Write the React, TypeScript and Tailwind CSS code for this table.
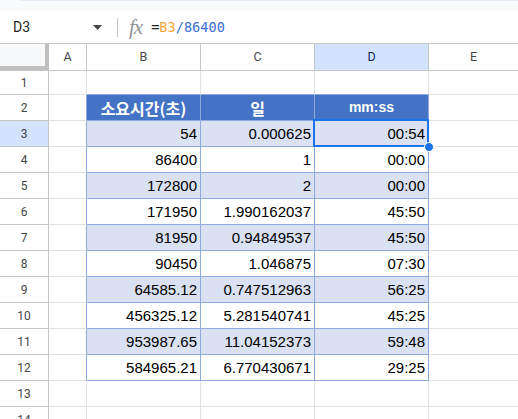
import React from "react";

const rows = [
  ["54", "0.000625", "00:54"],
  ["86400", "1", "00:00"],
  ["172800", "2", "00:00"],
  ["171950", "1.990162037", "45:50"],
  ["81950", "0.94849537", "45:50"],
  ["90450", "1.046875", "07:30"],
  ["64585.12", "0.747512963", "56:25"],
  ["456325.12", "5.281540741", "45:25"],
  ["953987.65", "11.04152373", "59:48"],
  ["584965.21", "6.770430671", "29:25"],
];

const cols = ["A", "B", "C", "D", "E"];

function RowNum({ n, active }: { n: number; active?: boolean }) {
  return (
    <div
      className={`w-[49px] shrink-0 flex items-center justify-center border-r border-b border-[#c4c7c5] text-[12px] text-[#444746] ${
        active ? "bg-[#d3e3fd]" : "bg-white"
      }`}
    >
      {n}
    </div>
  );
}

function EmptyRow({ n, h, topOfTable }: { n: number; h: string; topOfTable?: boolean }) {
  return (
    <div className={`flex ${h}`}>
      <RowNum n={n} />
      <div className="w-[38px] shrink-0 border-r border-b border-[#e1e1e1]" />
      {[0, 1, 2].map((i) => (
        <div
          key={i}
          className={`w-[114px] shrink-0 border-r border-b ${
            topOfTable ? "border-b-[#8eaadb]" : "border-b-[#e1e1e1]"
          } border-r-[#e1e1e1]`}
        />
      ))}
      <div className="flex-1 border-b border-[#e1e1e1]" />
    </div>
  );
}

export default function App() {
  return (
    <div className="w-[518px] h-[419px] overflow-hidden bg-white font-['Roboto',sans-serif]">
      {/* toolbar edge */}
      <div className="h-[11px] bg-[#f9fbfd]">
        <div className="ml-[20px] h-[1px] rounded-bl-[8px] bg-[#e6ecf5]" />
      </div>

      {/* formula bar */}
      <div className="h-[33px] flex items-center border-b border-[#c4c7c5] bg-white">
        <div className="w-[110px] flex items-center pl-[13px] pr-[8px]">
          <span className="text-[14px] text-[#1f1f1f]">D3</span>
          <svg className="ml-auto" width="9" height="5" viewBox="0 0 9 5">
            <path d="M0 0h9L4.5 5z" fill="#444746" />
          </svg>
        </div>
        <div className="ml-[7px] w-px h-[19px] bg-[#c4c7c5]" />
        <span className="ml-[11px] text-[21px] leading-none italic text-[#8f959b] font-['Liberation_Serif',serif] tracking-[-1px]">
          fx
        </span>
        <span className="ml-[9px] text-[13.6px] font-['DejaVu_Sans_Mono',monospace] text-[#1f1f1f]">
          =<span className="text-[#f5a742]">B3</span>
          <span className="text-[#3d6fd6]">/86400</span>
        </span>
      </div>

      {/* column header */}
      <div className="flex h-[27px] border-b border-[#c4c7c5]">
        <div className="w-[49px] shrink-0 bg-[#f8f9fa] border-r-[4px] border-b-[4px] border-[#c0c0c0]" />
        {cols.map((c) => (
          <div
            key={c}
            className={`${
              c === "A" ? "w-[38px]" : c === "E" ? "flex-1" : "w-[114px]"
            } shrink-0 flex items-center justify-center text-[12.5px] ${
              c === "E" ? "" : "border-r"
            } border-[#c4c7c5] ${
              c === "D" ? "bg-[#d3e3fd] text-[#0b2a5b]" : "text-[#444746]"
            }`}
          >
            {c}
          </div>
        ))}
      </div>

      {/* row 1 */}
      <EmptyRow n={1} h="h-[24px]" topOfTable />

      {/* row 2 - table header */}
      <div className="flex h-[26px]">
        <RowNum n={2} />
        <div className="w-[38px] shrink-0 border-r border-r-[#8eaadb] border-b border-b-[#e1e1e1]" />
        {["소요시간(초)", "일", "mm:ss"].map((t, i) => (
          <div
            key={i}
            className={`w-[114px] shrink-0 flex items-center justify-center bg-[#4472c4] text-white font-bold border-r border-b border-[#8eaadb] ${
              i === 2 ? "text-[14px] font-['Liberation_Sans',sans-serif]" : "text-[16px] font-['Noto_Sans_CJK_KR',sans-serif]"
            }`}
          >
            {t}
          </div>
        ))}
        <div className="flex-1 border-b border-[#e1e1e1]" />
      </div>

      {/* data rows */}
      {rows.map((r, idx) => {
        const n = idx + 3;
        const shaded = idx % 2 === 0;
        return (
          <div key={n} className="relative flex h-[26px]">
            <RowNum n={n} active={n === 3} />
            <div className="w-[38px] shrink-0 border-r border-r-[#8eaadb] border-b border-b-[#e1e1e1]" />
            {r.map((v, i) => (
              <div
                key={i}
                className={`w-[114px] shrink-0 flex items-center justify-end pr-[3px] pt-[1px] text-[15px] text-black font-['Liberation_Sans',sans-serif] border-r border-b border-[#8eaadb] ${
                  shaded ? "bg-[#d9e1f2]" : "bg-white"
                }`}
              >
                {v}
              </div>
            ))}
            <div className="flex-1 border-b border-[#e1e1e1]" />
            {n === 3 && (
              <>
                <div className="absolute left-[313px] top-[-2px] w-[116px] h-[28px] border-2 border-[#1a73e8] pointer-events-none" />
                <div className="absolute left-[424px] top-[21px] w-[10px] h-[10px] rounded-full bg-[#1a73e8] border border-white z-10" />
              </>
            )}
          </div>
        );
      })}

      <EmptyRow n={13} h="h-[26px]" />
      <EmptyRow n={14} h="h-[26px]" />
    </div>
  );
}
